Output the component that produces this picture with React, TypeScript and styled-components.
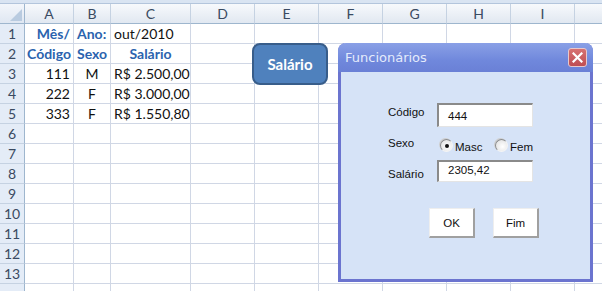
import React from 'react'
import styled, { createGlobalStyle } from 'styled-components'

const GlobalStyle = createGlobalStyle`
  html, body {
    margin: 0;
    padding: 0;
    background: #ffffff;
    overflow: hidden;
  }
`

const COLS = [
    { name: 'A', width: 49 },
    { name: 'B', width: 37 },
    { name: 'C', width: 80 },
    { name: 'D', width: 64 },
    { name: 'E', width: 64 },
    { name: 'F', width: 64 },
    { name: 'G', width: 64 },
    { name: 'H', width: 64 },
    { name: 'I', width: 64 },
    { name: '', width: 40 },
]

const gridTemplate = `25px ${COLS.map(c => c.width + 'px').join(' ')}`

type Align = 'left' | 'center' | 'right'
type CellData = { text: string, align?: Align, bold?: boolean }

const DATA: Record<number, Record<string, CellData>> = {
    1: {
        A: { text: 'Mês/', align: 'right', bold: true },
        B: { text: 'Ano:', align: 'left', bold: true },
        C: { text: 'out/2010', align: 'left' },
    },
    2: {
        A: { text: 'Código', align: 'center', bold: true },
        B: { text: 'Sexo', align: 'center', bold: true },
        C: { text: 'Salário', align: 'center', bold: true },
    },
    3: {
        A: { text: '111', align: 'right' },
        B: { text: 'M', align: 'center' },
        C: { text: 'R$ 2.500,00', align: 'left' },
    },
    4: {
        A: { text: '222', align: 'right' },
        B: { text: 'F', align: 'center' },
        C: { text: 'R$ 3.000,00', align: 'left' },
    },
    5: {
        A: { text: '333', align: 'right' },
        B: { text: 'F', align: 'center' },
        C: { text: 'R$ 1.550,80', align: 'left' },
    },
}

const Page = styled.div`
    position: relative;
    width: 602px;
    height: 291px;
    overflow: hidden;
    background: #ffffff;
    font-family: Lato, "Open Sans", sans-serif;
`

const TopStrip = styled.div`
    height: 3px;
    background: #d9e4f2;
    border-bottom: 1px solid #b3c5dc;
`

const Sheet = styled.div`
    display: grid;
    grid-template-columns: ${gridTemplate};
    grid-auto-rows: 20px;
`

const Corner = styled.div`
    position: relative;
    background: linear-gradient(#f3f6fb, #dfe7f2);
    border-right: 1px solid #9eb6ce;
    border-bottom: 1px solid #9eb6ce;
    box-sizing: border-box;

    &::after {
        content: '';
        position: absolute;
        right: 2px;
        bottom: 2px;
        border-style: solid;
        border-width: 0 0 12px 12px;
        border-color: transparent transparent #b9cbe0 transparent;
    }
`

const ColHeader = styled.div`
    display: flex;
    align-items: center;
    justify-content: center;
    background: linear-gradient(#f7f9fc, #e1e8f1);
    border-right: 1px solid #c5d2e2;
    border-bottom: 1px solid #9eb6ce;
    box-sizing: border-box;
    color: #3a4a61;
    font-size: 14px;
`

const RowHeader = styled.div`
    display: flex;
    align-items: center;
    justify-content: center;
    background: #e4ecf7;
    border-right: 1px solid #9eb6ce;
    border-bottom: 1px solid #c5d2e2;
    box-sizing: border-box;
    color: #3a4a61;
    font-size: 14px;
`

const Cell = styled.div<{ $align: Align, $bold: boolean }>`
    display: flex;
    align-items: center;
    justify-content: ${({ $align }) => $align === 'left' ? 'flex-start' : $align === 'right' ? 'flex-end' : 'center'};
    padding: 0 3px;
    border-right: 1px solid #d0d7e5;
    border-bottom: 1px solid #d0d7e5;
    box-sizing: border-box;
    white-space: nowrap;
    overflow: visible;
    font-size: 14px;
    font-weight: ${({ $bold }) => $bold ? 700 : 400};
    color: ${({ $bold }) => $bold ? '#2b63ae' : '#111111'};
`

const ShapeButton = styled.div`
    position: absolute;
    left: 252px;
    top: 43px;
    width: 76px;
    height: 42px;
    box-sizing: border-box;
    display: flex;
    align-items: center;
    justify-content: center;
    background: #4f81bd;
    border: 2px solid #385d8a;
    border-radius: 8px;
    color: #ffffff;
    font-weight: 700;
    font-size: 15px;
`

const Dialog = styled.div`
    position: absolute;
    left: 338px;
    top: 43px;
    width: 255px;
    height: 239px;
    box-sizing: border-box;
    display: flex;
    flex-direction: column;
    background: #d6e3f7;
    border: 3px solid #6b74cf;
    border-top: none;
    border-radius: 8px 8px 0 0;
    font-family: "Liberation Sans", Arial, sans-serif;
`

const TitleBar = styled.div`
    height: 29px;
    margin: 0 -3px;
    padding: 0 6px 0 7px;
    display: flex;
    align-items: center;
    justify-content: space-between;
    background: linear-gradient(#8aa0e6, #7088dc 60%, #6a80d6);
    border-radius: 8px 8px 0 0;
    color: #e4ebfb;
    font-family: "DejaVu Sans", sans-serif;
    font-size: 13px;
`

const CloseButton = styled.div`
    width: 19px;
    height: 19px;
    box-sizing: border-box;
    display: flex;
    align-items: center;
    justify-content: center;
    background: linear-gradient(#d77272, #bf4d52);
    border: 1px solid #e8c8cc;
    border-radius: 3px;
`

const Body = styled.div`
    padding: 31px 0 0 47px;
    display: flex;
    flex-direction: column;
    font-size: 11.5px;
    color: #111111;
`

const FieldRow = styled.div<{ $height: number, $gap: number }>`
    display: grid;
    grid-template-columns: 49px 96px;
    height: ${({ $height }) => $height}px;
    margin-bottom: ${({ $gap }) => $gap}px;
`

const Label = styled.div<{ $top: number }>`
    padding-top: ${({ $top }) => $top}px;
`

const TextBox = styled.div<{ $top: number }>`
    box-sizing: border-box;
    background: #ffffff;
    border-top: 2px solid #8a8a8a;
    border-left: 2px solid #8a8a8a;
    border-right: 1px solid #e4e4e4;
    border-bottom: 1px solid #e4e4e4;
    padding: ${({ $top }) => $top}px 0 0 9px;
`

const Radios = styled.div`
    display: flex;
    align-items: center;
    padding-left: 3px;
`

const RadioItem = styled.div`
    display: flex;
    align-items: center;
    flex-shrink: 0;
    gap: 2px;
    width: 55px;
`

const RadioText = styled.span`
    padding-top: 3px;
`

const RadioDot = styled.span<{ $checked: boolean }>`
    position: relative;
    flex-shrink: 0;
    width: 13px;
    height: 13px;
    border-radius: 50%;
    box-sizing: border-box;
    background: radial-gradient(circle at 60% 60%, #ffffff, #dcdcdc);
    border-top: 1px solid #8b8b8b;
    border-left: 1px solid #8b8b8b;
    border-right: 1px solid #f4f4f4;
    border-bottom: 1px solid #f4f4f4;
    box-shadow: -1px -1px 0 #cfcfcf;

    &::after {
        content: '';
        display: ${({ $checked }) => $checked ? 'block' : 'none'};
        position: absolute;
        left: 4px;
        top: 4px;
        width: 4px;
        height: 4px;
        border-radius: 50%;
        background: #111111;
    }
`

const ButtonRow = styled.div`
    display: flex;
    gap: 18px;
    margin-top: 26px;
    padding-left: 41px;
`

const FormButton = styled.div`
    width: 46px;
    height: 30px;
    box-sizing: border-box;
    display: flex;
    align-items: center;
    justify-content: center;
    background: #ffffff;
    border-top: 1px solid #eeeeee;
    border-left: 1px solid #eeeeee;
    border-right: 2px solid #a0a0a0;
    border-bottom: 2px solid #a0a0a0;
`

export default function App() {
    const rows = Array.from({ length: 14 }, (_, i) => i + 1)

    return (
        <Page>
            <GlobalStyle />
            <TopStrip />
            <Sheet>
                <Corner />
                {COLS.map((c, i) => <ColHeader key={'h' + i}>{c.name}</ColHeader>)}
                {rows.map(r => (
                    <React.Fragment key={r}>
                        <RowHeader>{r < 14 ? r : ''}</RowHeader>
                        {COLS.map((c, i) => {
                            const d = DATA[r]?.[c.name]
                            return (
                                <Cell key={i} $align={d?.align ?? 'left'} $bold={!!d?.bold}>
                                    {d?.text}
                                </Cell>
                            )
                        })}
                    </React.Fragment>
                ))}
            </Sheet>

            <ShapeButton>Salário</ShapeButton>

            <Dialog>
                <TitleBar>
                    <span>Funcionários</span>
                    <CloseButton>
                        <svg width="11" height="11" viewBox="0 0 11 11">
                            <path d="M1.5 1.5 L9.5 9.5 M9.5 1.5 L1.5 9.5" stroke="#ffffff" strokeWidth="2.2" strokeLinecap="square" />
                        </svg>
                    </CloseButton>
                </TitleBar>
                <Body>
                    <FieldRow $height={24} $gap={8}>
                        <Label $top={3}>Código</Label>
                        <TextBox $top={5}>444</TextBox>
                    </FieldRow>
                    <FieldRow $height={20} $gap={5}>
                        <Label $top={2}>Sexo</Label>
                        <Radios>
                            <RadioItem>
                                <RadioDot $checked />
                                <RadioText>Masc</RadioText>
                            </RadioItem>
                            <RadioItem>
                                <RadioDot $checked={false} />
                                <RadioText>Fem</RadioText>
                            </RadioItem>
                        </Radios>
                    </FieldRow>
                    <FieldRow $height={22} $gap={0}>
                        <Label $top={8}>Salário</Label>
                        <TextBox $top={2}>2305,42</TextBox>
                    </FieldRow>
                    <ButtonRow>
                        <FormButton>OK</FormButton>
                        <FormButton>Fim</FormButton>
                    </ButtonRow>
                </Body>
            </Dialog>
        </Page>
    )
}
